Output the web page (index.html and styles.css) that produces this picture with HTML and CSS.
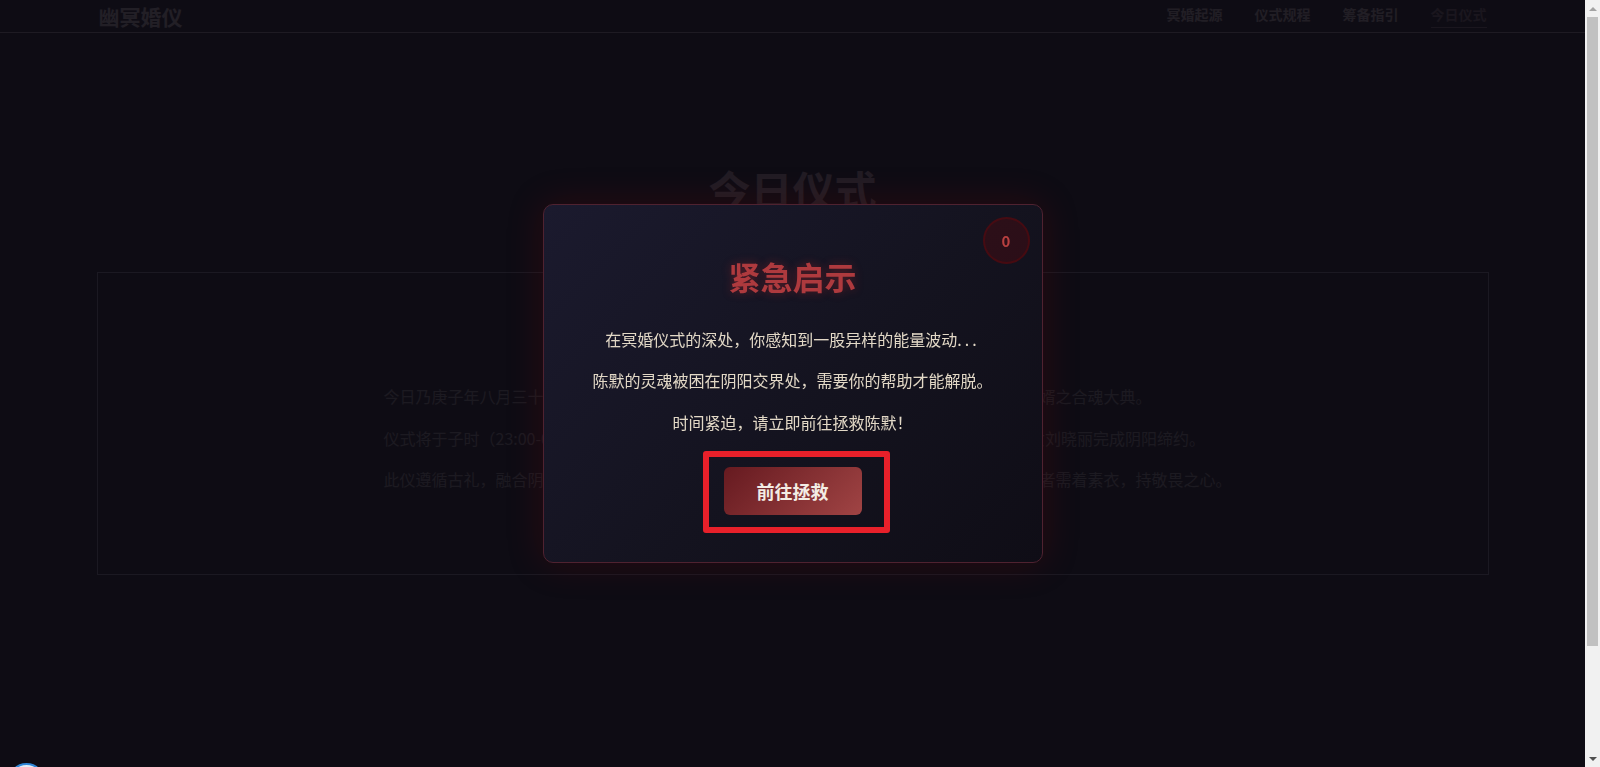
FILE: index.html
```html
<!DOCTYPE html>
<html lang="zh-CN">
<head>
<meta charset="utf-8">
<title>幽冥婚仪 - 今日仪式</title>
<link rel="stylesheet" href="styles.css">
</head>
<body>
<header class="site-header">
  <div class="container header-inner">
    <div class="logo">幽冥婚仪</div>
    <nav class="nav">
      <a class="nav-link">冥婚起源</a>
      <a class="nav-link">仪式规程</a>
      <a class="nav-link">筹备指引</a>
      <a class="nav-link active">今日仪式</a>
    </nav>
  </div>
</header>

<main class="page">
  <section class="container today">
    <h1 class="today-title">今日仪式</h1>
    <div class="ritual-card">
      <div class="ritual-text">
        <p>今日乃庚子年八月三十日，子夜阴气最盛之时，幽冥婚仪司于此为陈氏亡子陈默举行冥府迎新婿之合魂大典。</p>
        <p>仪式将于子时（23:00-01:00）正式举行，由幽冥婚仪司祭司主礼，为陈氏亡子陈默与刘氏亡女刘晓丽完成阴阳缔约。</p>
        <p>此仪遵循古礼，融合阴阳两界之古规，以红绳系魂、以纸轿迎亲，凡观礼之宾客及诸参与仪式者需着素衣，持敬畏之心。</p>
      </div>
    </div>
  </section>
</main>

<div class="overlay">
  <div class="modal">
    <div class="countdown">0</div>
    <h2 class="modal-title">紧急启示</h2>
    <p>在冥婚仪式的深处，你感知到一股异样的能量波动<span class="dots">...</span></p>
    <p>陈默的灵魂被困在阴阳交界处，需要你的帮助才能解脱。</p>
    <p>时间紧迫，请立即前往拯救陈默！</p>
    <div class="action">
      <button class="rescue-btn">前往拯救</button>
      <span class="highlight"></span>
    </div>
  </div>
</div>

<div class="float-btn"></div>

<div class="scrollbar" aria-hidden="true">
  <div class="sb-button"><span class="sb-arrow-up"></span></div>
  <div class="sb-track"><div class="sb-thumb"></div></div>
  <div class="sb-button"><span class="sb-arrow-down"></span></div>
</div>
</body>
</html>
```

FILE: styles.css
```css
html, body {
  margin: 0;
  padding: 0;
}

body {
  background: #0f0d14;
  color: #8c8a89;
  font-family: "Noto Sans CJK SC", "Noto Sans", sans-serif;
  margin-right: 15px;
}

.container {
  max-width: 1392px;
  margin: 0 auto;
}

/* header */
.site-header {
  border-bottom: 1px solid #8c8289;
}

.header-inner {
  height: 32px;
  display: flex;
  align-items: center;
  justify-content: space-between;
}

.logo {
  font-size: 21px;
  font-weight: 700;
  line-height: 32px;
  color: #aca2a4;
  padding-left: 2px;
}

.nav {
  display: flex;
  gap: 32px;
  padding-right: 2px;
}

.nav-link {
  font-size: 14px;
  font-weight: 700;
  line-height: 20px;
  color: #a59b99;
  text-decoration: none;
  padding-bottom: 3px;
  border-bottom: 1px solid transparent;
}

.nav-link.active {
  color: #6a5c60;
  border-bottom-color: #6a5c60;
}

/* page content */
.today {
  padding: 131px 0 320px;
}

.today-title {
  margin: 0 0 58px;
  text-align: center;
  font-size: 42px;
  line-height: 50px;
  font-weight: 700;
  color: #a08e95;
}

.ritual-card {
  border: 1px solid #737180;
  padding: 111px 40px 81px 286px;
}

.ritual-text {
  display: flex;
  flex-direction: column;
  gap: 16px;
}

.ritual-text p {
  margin: 0;
  font-size: 16px;
  line-height: 25.6px;
  color: #7c7a7c;
  white-space: nowrap;
}

/* modal */
.overlay {
  position: fixed;
  top: 0;
  left: 0;
  bottom: 0;
  right: 15px;
  background: rgba(15, 13, 20, 0.88);
  display: flex;
  align-items: center;
  justify-content: center;
}

.modal {
  position: relative;
  width: 500px;
  box-sizing: border-box;
  padding: 52px 40px 47px;
  background: linear-gradient(135deg, #1b1a2e 0%, #14131f 55%, #0f0d16 100%);
  border: 1px solid #4f2230;
  border-radius: 10px;
  box-shadow: 0 0 36px rgba(139, 0, 0, 0.22);
  text-align: center;
}

.countdown {
  position: absolute;
  top: 12px;
  right: 12px;
  width: 43px;
  height: 43px;
  border-radius: 50%;
  background: rgba(139, 0, 0, 0.2);
  border: 2px solid rgba(139, 0, 0, 0.28);
  display: flex;
  align-items: center;
  justify-content: center;
  color: #b84040;
  font-size: 15px;
  font-weight: 700;
}

.modal-title {
  margin: 0 0 32px;
  font-size: 32px;
  line-height: 38px;
  font-weight: 700;
  color: #ae3a3e;
  text-shadow: 0 0 10px rgba(190, 40, 40, 0.4);
}

.modal p {
  margin: 0 0 16px;
  font-size: 16px;
  line-height: 25.6px;
  color: #e2d8c6;
}

.dots {
  letter-spacing: 3px;
}

.action {
  position: relative;
  display: inline-block;
  margin-top: 16px;
  vertical-align: top;
}

.rescue-btn {
  display: block;
  padding: 12px 33px;
  border: none;
  border-radius: 6px;
  background: linear-gradient(135deg, #661a20 0%, #a04444 100%);
  color: #f3ece4;
  font-family: inherit;
  font-size: 18px;
  line-height: 24px;
  font-weight: 700;
}

.highlight {
  position: absolute;
  left: -21px;
  right: -28px;
  top: -16px;
  bottom: -18px;
  border: 6px solid #e8202a;
  border-radius: 3px;
  pointer-events: none;
}

.float-btn {
  position: fixed;
  left: 8px;
  top: 763px;
  width: 33px;
  height: 33px;
  border-radius: 50%;
  background: #e4edf6;
  border: 2px solid #2f86d6;
}

/* browser scrollbar */
.scrollbar {
  position: fixed;
  top: 0;
  right: 0;
  bottom: 0;
  width: 15px;
  background: #f1f1f1;
  display: flex;
  flex-direction: column;
}

.sb-button {
  height: 17px;
  flex: none;
  display: flex;
  align-items: center;
  justify-content: center;
}

.sb-arrow-up {
  width: 0;
  height: 0;
  border-left: 4px solid transparent;
  border-right: 4px solid transparent;
  border-bottom: 4px solid #a3a3a3;
}

.sb-arrow-down {
  width: 0;
  height: 0;
  border-left: 4px solid transparent;
  border-right: 4px solid transparent;
  border-top: 4px solid #505050;
}

.sb-track {
  flex: 1;
  padding: 0 2px;
}

.sb-thumb {
  height: 629px;
  background: #c1c1c1;
}
```
